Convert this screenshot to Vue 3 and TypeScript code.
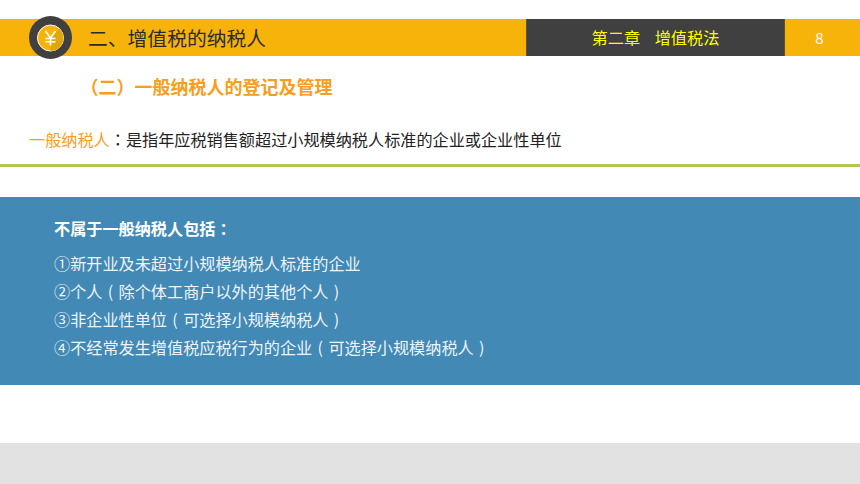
<script setup lang="ts">
interface Item {
  lead: string
  note?: string
}
const items: Item[] = [
  { lead: '①新开业及未超过小规模纳税人标准的企业' },
  { lead: '②个人', note: '除个体工商户以外的其他个人' },
  { lead: '③非企业性单位', note: '可选择小规模纳税人' },
  { lead: '④不经常发生增值税应税行为的企业', note: '可选择小规模纳税人' },
]
</script>

<template>
  <div class="page">
    <header class="bar">
      <div class="logo">
        <svg width="43" height="43" viewBox="0 0 43 43">
          <circle cx="21.5" cy="21.5" r="21.5" fill="#404040" />
          <circle cx="21.5" cy="22" r="13" fill="#f7b30a" stroke="#fff" stroke-width="1" />
          <path d="M21.5 22 L30.7 12.8 A13 13 0 0 1 21.5 35 Z" fill="#e0a70c" />
          <path d="M16.5 15 L21.5 22 L26.5 15 M21.5 22 V29.5 M16.5 22.5 H26.5 M16.5 25.8 H26.5" fill="none" stroke="#fff" stroke-width="1.6" />
        </svg>
      </div>
      <h1 class="title">二、增值税的纳税人</h1>
      <div class="chapter">第二章&nbsp;&nbsp;&nbsp;&nbsp;增值税法</div>
      <div class="num">8</div>
    </header>

    <h2 class="sub">（二）一般纳税人的登记及管理</h2>
    <p class="def"><span class="hl">一般纳税人</span><span class="punct">：</span>是指年应税销售额超过小规模纳税人标准的企业或企业性单位</p>
    <div class="rule"></div>

    <section class="panel">
      <h3 class="panel-title">不属于一般纳税人包括<span class="punct">：</span></h3>
      <ul class="list">
        <li v-for="item in items" :key="item.lead">
          {{ item.lead }}<template v-if="item.note"><span class="paren">(</span>{{ item.note }}<span class="paren">)</span></template>
        </li>
      </ul>
    </section>

    <div class="spacer"></div>
    <div class="foot"></div>
  </div>
</template>

<style scoped>
.page {
  width: 860px;
  height: 484px;
  display: flex;
  flex-direction: column;
  overflow: hidden;
  background: #fff;
  font-family: "Noto Sans CJK SC", "Liberation Sans", sans-serif;
  font-weight: 400;
  color: #222;
}
.bar {
  margin-top: 19px;
  height: 37px;
  flex: none;
  display: flex;
  align-items: center;
  background: #f7b30a;
}
.logo {
  width: 43px;
  height: 43px;
  margin: 0 16px 0 29px;
  flex: none;
}
.logo svg { display: block; }
.title {
  margin: 0;
  flex: 1;
  font-size: 19.8px;
  font-weight: 400;
  color: #2b2b2b;
}
.chapter {
  width: 259px;
  height: 37px;
  line-height: 36px;
  text-align: center;
  box-sizing: border-box;
  border-left: 1px solid #5e5436;
  border-right: 1px solid #5e5436;
  background: #404040;
  color: #ffff00;
  font-size: 16.2px;
  flex: none;
}
.num {
  width: 75px;
  text-align: center;
  color: #fff;
  font-size: 15px;
  flex: none;
  padding-right: 6px;
  box-sizing: border-box;
}
.sub {
  margin: 17px 0 0 80.5px;
  font-size: 18px;
  line-height: 26px;
  font-weight: 700;
  color: #f99d1c;
}
.def {
  margin: 28px 0 0 29px;
  font-size: 16.15px;
  line-height: 24px;
}
.hl { color: #f99d1c; }
.punct {
  font-family: "Noto Sans CJK TC", sans-serif;
}
.rule {
  margin-top: 13px;
  height: 3px;
  flex: none;
  background: #b5c44f;
}
.panel {
  margin-top: 30px;
  height: 188px;
  flex: none;
  box-sizing: border-box;
  padding: 19px 54px 0;
  background: #4289b5;
  color: #fff;
}
.panel-title {
  margin: 0;
  font-size: 16.15px;
  line-height: 24px;
  font-weight: 700;
}
.list {
  margin: 9px 0 0;
  padding: 0;
  list-style: none;
  font-size: 16.15px;
  line-height: 28px;
  color: #eef4f8;
}
.paren {
  display: inline-block;
  width: 1em;
  text-align: center;
}
.spacer { flex: 1; }
.foot {
  height: 41px;
  flex: none;
  background: #e2e2e2;
}
</style>
